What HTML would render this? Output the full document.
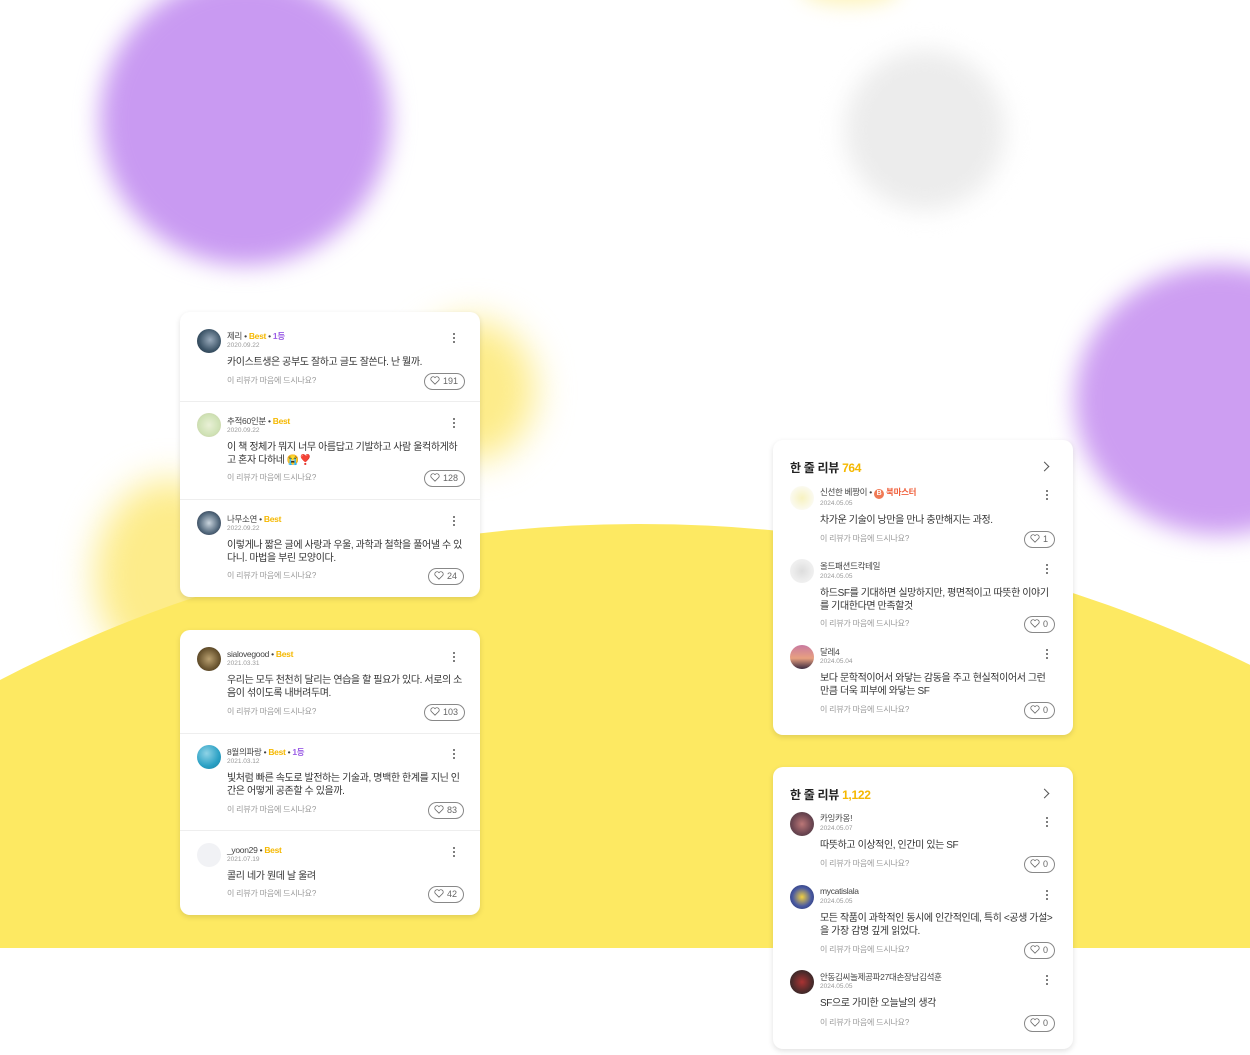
<!DOCTYPE html>
<html><head><meta charset="utf-8"><style>
*{margin:0;padding:0;box-sizing:border-box}
html,body{width:1250px;height:1055px;overflow:hidden}
body{position:relative;background:#fff;font-family:"Liberation Sans","Noto Sans CJK KR",sans-serif;color:#333}
.blob{position:absolute;border-radius:50%}
.card{position:absolute;background:#fff;border-radius:10px;box-shadow:0 2px 6px rgba(0,0,0,.12)}
.a{position:absolute;width:24px;height:24px;border-radius:50%}
.n{position:absolute;font-size:8.5px;color:#444;white-space:nowrap;line-height:10px;letter-spacing:-0.3px}
.n b{font-weight:bold;color:#f5b800}
.n i{font-style:normal;font-weight:bold;color:#9b5de5}
.d{position:absolute;font-size:6.5px;color:#999;line-height:8px}
.t{position:absolute;font-size:10px;color:#333;line-height:13px;width:236px;letter-spacing:-0.4px;word-break:break-all}
.h{position:absolute;font-size:8px;color:#999;line-height:10px;letter-spacing:-0.2px}
.p{position:absolute;height:17px;border:1px solid #888;border-radius:9px;font-size:9px;color:#666;line-height:15px;padding:0 6px 0 5px;white-space:nowrap}
.p svg{vertical-align:-1px;margin-right:3px}
.m{position:absolute;width:3px;font-size:0}
.m:before{content:"";position:absolute;left:0;top:0;width:2px;height:2px;background:#555;border-radius:50%;box-shadow:0 4px 0 #555,0 8px 0 #555}
.sep{position:absolute;left:0;right:0;height:1px;background:#eee}
.ti{position:absolute;font-size:12px;font-weight:bold;color:#222;letter-spacing:-0.3px}
.ti span{color:#f5b800}
.ch{position:absolute;width:7px;height:7px;border-right:1.3px solid #555;border-top:1.3px solid #555;transform:rotate(45deg)}
</style></head><body>
<div class="blob" style="left:100px;top:-25px;width:290px;height:290px;background:#c99af2;filter:blur(12px)"></div>
<div class="blob" style="left:845px;top:50px;width:160px;height:160px;background:#ececec;filter:blur(12px)"></div>
<div class="blob" style="left:1075px;top:265px;width:290px;height:270px;background:#cd9ef2;filter:blur(12px)"></div>
<div class="blob" style="left:800px;top:-30px;width:100px;height:35px;background:#fdf3b8;filter:blur(10px)"></div>
<div class="blob" style="left:410px;top:320px;width:125px;height:140px;background:#fdec8a;filter:blur(18px)"></div>
<div class="blob" style="left:95px;top:480px;width:150px;height:190px;background:#fdec8a;filter:blur(18px)"></div>
<div style="position:absolute;left:0;top:0;width:1250px;height:948px;overflow:hidden"><div style="position:absolute;left:-751px;top:524px;width:2782px;height:2782px;border-radius:50%;background:#fde962"></div></div>

<svg width="0" height="0" style="position:absolute"><defs><symbol id="hh" viewBox="0 0 12 11"><path d="M6 10 L1.5 5.5 A2.6 2.6 0 0 1 6 2 A2.6 2.6 0 0 1 10.5 5.5 Z" fill="none" stroke="#666" stroke-width="1"/></symbol></defs></svg>

<div class="card" style="left:180px;top:312px;width:300px;height:285px">
<div class="a" style="left:17px;top:17px;background:radial-gradient(circle at 55% 45%,#9ab 0,#3b5366 60%,#213040 100%)"></div>
<div class="n" style="left:47px;top:19px">제리 • <b>Best</b> • <i>1등</i></div>
<div class="d" style="left:47px;top:30px">2020.09.22</div>
<div class="t" style="left:47px;top:44px">카이스트생은 공부도 잘하고 글도 잘쓴다. 난 뭘까.</div>
<div class="h" style="left:47px;top:64px">이 리뷰가 마음에 드시나요?</div>
<div class="p" style="left:244px;top:61px"><svg width="10" height="9"><use href="#hh"/></svg>191</div>
<div class="m" style="left:273px;top:21px"></div>
<div class="sep" style="top:89px"></div>
<div class="a" style="left:17px;top:101px;background:radial-gradient(circle,#e9f0d6 0,#cfe2b5 60%,#c7c3a0 100%)"></div>
<div class="n" style="left:47px;top:104px">추적60인분 • <b>Best</b></div>
<div class="d" style="left:47px;top:115px">2020.09.22</div>
<div class="t" style="left:47px;top:129px">이 책 정체가 뭐지 너무 아름답고 기발하고 사람 울컥하게하고 혼자 다하네 😭❣️</div>
<div class="h" style="left:47px;top:161px">이 리뷰가 마음에 드시나요?</div>
<div class="p" style="left:244px;top:158px"><svg width="10" height="9"><use href="#hh"/></svg>128</div>
<div class="m" style="left:273px;top:106px"></div>
<div class="sep" style="top:187px"></div>
<div class="a" style="left:17px;top:199px;background:radial-gradient(circle,#c9d4dd 0,#50667a 60%,#223 100%)"></div>
<div class="n" style="left:47px;top:202px">나무소연 • <b>Best</b></div>
<div class="d" style="left:47px;top:213px">2022.09.22</div>
<div class="t" style="left:47px;top:227px">이렇게나 짧은 글에 사랑과 우울, 과학과 철학을 풀어낼 수 있다니. 마법을 부린 모양이다.</div>
<div class="h" style="left:47px;top:259px">이 리뷰가 마음에 드시나요?</div>
<div class="p" style="left:248px;top:256px"><svg width="10" height="9"><use href="#hh"/></svg>24</div>
<div class="m" style="left:273px;top:204px"></div>
</div>

<div class="card" style="left:180px;top:630px;width:300px;height:285px">
<div class="a" style="left:17px;top:17px;background:radial-gradient(circle,#b9a070 0,#6a5530 60%,#3a2c18 100%)"></div>
<div class="n" style="left:47px;top:19px">sialovegood • <b>Best</b></div>
<div class="d" style="left:47px;top:30px">2021.03.31</div>
<div class="t" style="left:47px;top:44px">우리는 모두 천천히 달리는 연습을 할 필요가 있다. 서로의 소음이 섞이도록 내버려두며.</div>
<div class="h" style="left:47px;top:77px">이 리뷰가 마음에 드시나요?</div>
<div class="p" style="left:244px;top:74px"><svg width="10" height="9"><use href="#hh"/></svg>103</div>
<div class="m" style="left:273px;top:22px"></div>
<div class="sep" style="top:103px"></div>
<div class="a" style="left:17px;top:115px;background:radial-gradient(circle at 40% 35%,#8fd3e6 0,#2aa0c4 60%,#1a7fa0 100%)"></div>
<div class="n" style="left:47px;top:117px">8월의파랑 • <b>Best</b> • <i>1등</i></div>
<div class="d" style="left:47px;top:128px">2021.03.12</div>
<div class="t" style="left:47px;top:142px">빛처럼 빠른 속도로 발전하는 기술과, 명백한 한계를 지닌 인간은 어떻게 공존할 수 있을까.</div>
<div class="h" style="left:47px;top:175px">이 리뷰가 마음에 드시나요?</div>
<div class="p" style="left:248px;top:172px"><svg width="10" height="9"><use href="#hh"/></svg>83</div>
<div class="m" style="left:273px;top:119px"></div>
<div class="sep" style="top:200px"></div>
<div class="a" style="left:17px;top:213px;background:#f1f2f5"></div>
<div class="n" style="left:47px;top:215px">_yoon29 • <b>Best</b></div>
<div class="d" style="left:47px;top:226px">2021.07.19</div>
<div class="t" style="left:47px;top:240px">콜리 네가 뭔데 날 울려</div>
<div class="h" style="left:47px;top:259px">이 리뷰가 마음에 드시나요?</div>
<div class="p" style="left:248px;top:256px"><svg width="10" height="9"><use href="#hh"/></svg>42</div>
<div class="m" style="left:273px;top:217px"></div>
</div>

<div class="card" style="left:773px;top:440px;width:300px;height:295px">
<div class="ti" style="left:17px;top:19px">한 줄 리뷰 <span>764</span></div>
<div class="ch" style="left:268px;top:23px"></div>
<div class="a" style="left:17px;top:46px;background:radial-gradient(circle,#f7f2c0 0,#fbfaf0 70%,#fff 100%)"></div>
<div class="n" style="left:47px;top:47px">신선한 베짱이 • <span style="display:inline-block;width:10px;height:10px;border-radius:50%;background:#f07a55;color:#fff;font-size:7px;text-align:center;line-height:10px;font-weight:bold">B</span> <b style="color:#f0603c">북마스터</b></div>
<div class="d" style="left:47px;top:60px">2024.05.05</div>
<div class="t" style="left:47px;top:74px">차가운 기술이 낭만을 만나 충만해지는 과정.</div>
<div class="h" style="left:47px;top:94px">이 리뷰가 마음에 드시나요?</div>
<div class="p" style="left:251px;top:91px"><svg width="10" height="9"><use href="#hh"/></svg>1</div>
<div class="m" style="left:273px;top:50px"></div>
<div class="a" style="left:17px;top:119px;background:radial-gradient(circle,#ddd 0,#eee 60%,#f3f3f3 100%)"></div>
<div class="n" style="left:47px;top:121px">올드패션드칵테일</div>
<div class="d" style="left:47px;top:133px">2024.05.05</div>
<div class="t" style="left:47px;top:147px">하드SF를 기대하면 실망하지만, 평면적이고 따뜻한 이야기를 기대한다면 만족할것</div>
<div class="h" style="left:47px;top:179px">이 리뷰가 마음에 드시나요?</div>
<div class="p" style="left:251px;top:176px"><svg width="10" height="9"><use href="#hh"/></svg>0</div>
<div class="m" style="left:273px;top:124px"></div>
<div class="a" style="left:17px;top:205px;background:linear-gradient(#c97aa0,#e8a080 55%,#3a2a40 100%)"></div>
<div class="n" style="left:47px;top:207px">달레4</div>
<div class="d" style="left:47px;top:218px">2024.05.04</div>
<div class="t" style="left:47px;top:232px">보다 문학적이어서 와닿는 감동을 주고 현실적이어서 그런 만큼 더욱 피부에 와닿는 SF</div>
<div class="h" style="left:47px;top:265px">이 리뷰가 마음에 드시나요?</div>
<div class="p" style="left:251px;top:262px"><svg width="10" height="9"><use href="#hh"/></svg>0</div>
<div class="m" style="left:273px;top:209px"></div>
</div>

<div class="card" style="left:773px;top:767px;width:300px;height:282px">
<div class="ti" style="left:17px;top:19px">한 줄 리뷰 <span>1,122</span></div>
<div class="ch" style="left:268px;top:23px"></div>
<div class="a" style="left:17px;top:45px;background:radial-gradient(circle,#b77 0,#6a4450 60%,#444 100%)"></div>
<div class="n" style="left:47px;top:46px">카잉카옹!</div>
<div class="d" style="left:47px;top:58px">2024.05.07</div>
<div class="t" style="left:47px;top:72px">따뜻하고 이상적인, 인간미 있는 SF</div>
<div class="h" style="left:47px;top:92px">이 리뷰가 마음에 드시나요?</div>
<div class="p" style="left:251px;top:89px"><svg width="10" height="9"><use href="#hh"/></svg>0</div>
<div class="m" style="left:273px;top:50px"></div>
<div class="a" style="left:17px;top:118px;background:radial-gradient(circle,#f2d040 0,#4a5aa0 55%,#1d2a6a 100%)"></div>
<div class="n" style="left:47px;top:119px">mycatislala</div>
<div class="d" style="left:47px;top:131px">2024.05.05</div>
<div class="t" style="left:47px;top:145px">모든 작품이 과학적인 동시에 인간적인데, 특히 &lt;공생 가설&gt;을 가장 감명 깊게 읽었다.</div>
<div class="h" style="left:47px;top:178px">이 리뷰가 마음에 드시나요?</div>
<div class="p" style="left:251px;top:175px"><svg width="10" height="9"><use href="#hh"/></svg>0</div>
<div class="m" style="left:273px;top:123px"></div>
<div class="a" style="left:17px;top:203px;background:radial-gradient(circle,#a33 0,#4a2a2a 60%,#222 100%)"></div>
<div class="n" style="left:47px;top:205px">안동김씨놀제공파27대손장남김석훈</div>
<div class="d" style="left:47px;top:216px">2024.05.05</div>
<div class="t" style="left:47px;top:230px">SF으로 가미한 오늘날의 생각</div>
<div class="h" style="left:47px;top:251px">이 리뷰가 마음에 드시나요?</div>
<div class="p" style="left:251px;top:248px"><svg width="10" height="9"><use href="#hh"/></svg>0</div>
<div class="m" style="left:273px;top:208px"></div>
</div>
</body></html>
